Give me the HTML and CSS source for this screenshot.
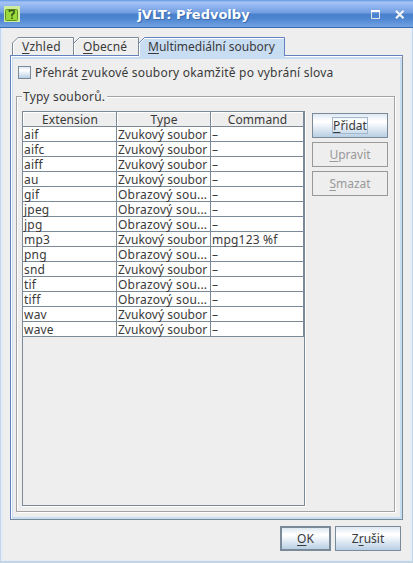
FILE: index.html
```
<!DOCTYPE html>
<html lang="cs">
<head>
<meta charset="utf-8">
<title>jVLT: Předvolby</title>
<link rel="stylesheet" href="styles.css">
</head>
<body>
<div class="window">
  <header class="titlebar">
    <svg class="app-icon" width="16" height="16" viewBox="0 0 16 16"><rect width="16" height="16" fill="#cdec9c"/><rect x="1.500" y="3.500" width="12" height="11" rx="1" fill="#9bd83a" stroke="#5f9420"/><path d="M5.500 6V4.500h4.500v2.500L8 8.500v2M8 11.500v1.500" fill="none" stroke="#35591a" stroke-width="1.600"/></svg>
    <h1 class="title">jVLT: Předvolby</h1>
    <svg class="controls" width="34" height="9" viewBox="0 0 34 9"><path d="M.5 .5h8v8h-8z" fill="none" stroke="#e4e8ee"/><path d="M0 1h9" stroke="#fff" stroke-width="2"/><path d="M25 .8l7.500 7.400M32.500 .8l-7.500 7.400" stroke="#f4f4f4" stroke-width="2.200"/></svg>
  </header>
  <main class="content">
    <nav class="tabs">
      <div class="tab t1"><svg class="shape" width="62" height="18"><path d="M.5 18V6L6 .5H61.500V18" fill="#eee" stroke="#7a8a99"/><path d="M1.500 18V6.500L6.500 1.500H61" fill="none" stroke="#fff"/></svg><span><u>V</u>zhled</span></div>
      <div class="tab t2"><svg class="shape" width="65" height="18"><path d="M0 6L5.500 .5H64.500V18" fill="#eee" stroke="#7a8a99"/><path d="M.5 18V6.500L5.500 1.500H64" fill="none" stroke="#fff"/></svg><span><u>O</u>becné</span></div>
      <div class="tab t3"><svg class="shape" width="147" height="22"><path d="M0 22V6L5.500 .5H146V22z" fill="#c8ddf2"/><path d="M0 6L5.500 .5H145.500V19" fill="none" stroke="#6382bf"/><path d="M.5 19V6.500L5.500 1.500H144.500" fill="none" stroke="#fff"/></svg><span><u>M</u>ultimediální soubory</span></div>
    </nav>
    <section class="panel">
      <label class="check"><i class="box"></i><span>Přehrát <u>z</u>vukové soubory okamžitě po vybrání slova</span></label>
      <div class="group">
        <div class="legend">Typy souborů.</div>
        <div class="table">
          <div class="row head"><div>Extension</div><div>Type</div><div>Command</div></div>
          <div class="row"><div>aif</div><div class="snd">Zvukový soubor</div><div>–</div></div>
          <div class="row"><div>aifc</div><div class="snd">Zvukový soubor</div><div>–</div></div>
          <div class="row"><div>aiff</div><div class="snd">Zvukový soubor</div><div>–</div></div>
          <div class="row"><div>au</div><div class="snd">Zvukový soubor</div><div>–</div></div>
          <div class="row"><div>gif</div><div>Obrazový sou...</div><div>–</div></div>
          <div class="row"><div>jpeg</div><div>Obrazový sou...</div><div>–</div></div>
          <div class="row"><div>jpg</div><div>Obrazový sou...</div><div>–</div></div>
          <div class="row"><div>mp3</div><div class="snd">Zvukový soubor</div><div>mpg123 %f</div></div>
          <div class="row"><div>png</div><div>Obrazový sou...</div><div>–</div></div>
          <div class="row"><div>snd</div><div class="snd">Zvukový soubor</div><div>–</div></div>
          <div class="row"><div>tif</div><div>Obrazový sou...</div><div>–</div></div>
          <div class="row"><div>tiff</div><div>Obrazový sou...</div><div>–</div></div>
          <div class="row"><div>wav</div><div class="snd">Zvukový soubor</div><div>–</div></div>
          <div class="row"><div>wave</div><div class="snd">Zvukový soubor</div><div>–</div></div>
        </div>
        <div class="side">
          <button class="btn"><span class="focus"><u>P</u>řidat</span></button>
          <button class="btn off"><span><u>U</u>pravit</span></button>
          <button class="btn off"><span><u>S</u>mazat</span></button>
        </div>
      </div>
    </section>
    <footer class="actions">
      <button class="btn ok"><span><u>O</u>K</span></button>
      <button class="btn cancel"><span>Z<u>r</u>ušit</span></button>
    </footer>
  </main>
</div>
</body>
</html>
```
FILE: styles.css
```
* { box-sizing: border-box; }
body { margin: 0; font: 12px/15px "Noto Sans", sans-serif; color: #3a3a3a; letter-spacing: .2px; }
u { text-decoration: underline; text-underline-offset: 2px; text-decoration-thickness: 1px; text-decoration-skip-ink: none; }
.window { width: 413px; height: 563px; background: #eee; overflow: hidden; }
.titlebar { height: 28px; display: flex; align-items: center; padding: 0 8px 0 4px; border-bottom: 1px solid #3a6cb0; background: linear-gradient(#6c9ee2 0, #79a7ea 1px, #a6c4f6 2px, #8db2ee 7px, #6f9ce0 13px, #4a80cc 14px, #4c84d0 18px, #72a2e2 27px); }
.title { flex: 1; margin: 0; text-align: center; font: bold 13px/16px "DejaVu Sans", sans-serif; letter-spacing: 0; color: #fff; text-shadow: 1px 1px 0 #3c6cae; padding: 2px 4px 0 0; }
.controls { margin-top: 2px; }
.content { height: 535px; padding: 9px 8px 0 7px; border: solid #c4d5e8; border-width: 0 1px 2px; box-shadow: inset 2px 0 #e4eef8, inset -2px 0 #e4eef8, inset 0 -1px #e4eaf0; }
.tabs { display: flex; height: 18px; padding-left: 4px; position: relative; z-index: 1; }
.tab { position: relative; padding: 2px 0 0 10px; white-space: nowrap; }
.tab span { position: relative; }
.shape { position: absolute; left: 0; top: 0; }
.t1 { width: 62px; }
.t2 { width: 65px; padding-left: 9px; letter-spacing: .1px; }
.t3 { width: 147px; padding-left: 9px; letter-spacing: 0; }
.panel { margin-left: 2px; width: 393px; height: 465px; border: 1px solid #6382bf; border-right-color: #7a8a99; border-bottom-color: #7a8a99; box-shadow: inset 0 1px #fff, inset 1px 0 #fff, inset 0 3px #c8ddf2, inset 2px 0 #c8ddf2, inset -2px -2px #c8ddf2; padding: 10px 7px 0 5px; }
.check { display: flex; align-items: center; height: 13px; padding-left: 2px; white-space: nowrap; }
.box { width: 13px; height: 13px; border: 1px solid #7a8a99; background: linear-gradient(#dde8f3, #fff 30%, #b8cfe5); margin-right: 4px; }
.group { position: relative; display: flex; width: 379px; height: 416px; margin-top: 17px; border: 1px solid #a3a3a3; box-shadow: 1px 1px #fff, inset 1px 1px #fff; padding: 14px 6px 0 5px; gap: 7px; }
.legend { position: absolute; left: 5px; top: -8px; background: #eee; padding: 0 2px 0 1px; white-space: nowrap; }
.table { width: 283px; height: 395px; border: 1px solid #7a8a99; box-shadow: 1px 1px #fff; }
.row { display: grid; grid-template-columns: 94px 94px 93px; height: 15px; }
.row div { height: 15px; background: #fff; border: solid #7a8a99; border-width: 0 1px 1px 0; padding-left: 1px; line-height: 15px; white-space: nowrap; }
.row .snd { letter-spacing: 0; }
.row.head div { background: #eee; text-align: center; letter-spacing: .1px; box-shadow: inset 1px 1px #fff; }
.side { display: flex; flex-direction: column; gap: 4px; padding-top: 2px; }
.btn { width: 76px; height: 25px; padding: 0; font: inherit; letter-spacing: 0; color: #3a3a3a; border: 1px solid #7a8a99; background: linear-gradient(#dde8f3 0, #fff 30%, #fff 35%, #b8cfe5 100%); white-space: nowrap; }
.off { color: #999; background: #eee; border-color: #999; }
.focus { display: inline-block; border: 1px solid #a3b8cc; height: 17px; line-height: 15px; }
.actions { display: flex; justify-content: flex-end; gap: 4px; margin: 6px 3px 0 0; }
.ok { width: 51px; border-width: 2px; }
.cancel { width: 66px; }
```
